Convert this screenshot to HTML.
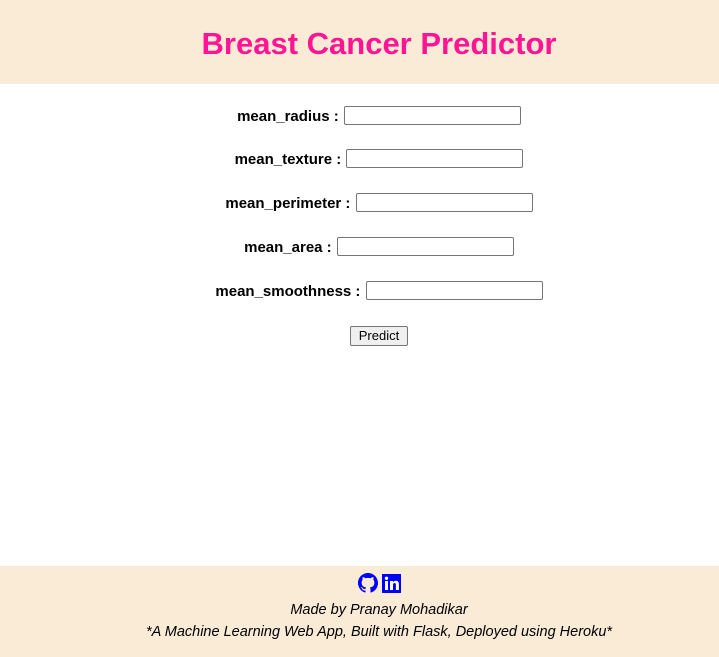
<!DOCTYPE html>
<html><head><style>
body{margin:0;width:719px;height:657px;overflow:hidden;background:#fff;font-family:"Liberation Sans",sans-serif;position:relative}
.wrap{width:758px;position:absolute;left:0;top:0}
.hdr{height:84px;background:#faebd7;text-align:center}
.hdr h1{margin:0;padding-top:25px;font-size:31px;color:#ff1493;font-weight:bold;line-height:38px}
.row{position:absolute;left:0;width:758px;text-align:center;font-weight:bold;font-size:15px;color:#000;height:22px;line-height:22px}
.row input{width:171px;height:15px;border:1px solid #767676;border-radius:2px;padding:1px 2px;vertical-align:middle;margin:0;margin-left:1px;position:relative;top:-2px}
.btn{position:absolute;left:350px;top:326px;width:58px;height:20px;border:1px solid #767676;border-radius:2px;background:#efefef;font-size:13px;text-align:center;line-height:18px;box-sizing:border-box}
.ftr{position:absolute;left:0;top:566px;width:719px;height:91px;background:#faebd7}
.ft{position:absolute;left:0;width:758px;text-align:center;font-style:italic;font-size:14.5px;color:#000}
</style></head><body>
<div class="wrap">
<div class="hdr"><h1>Breast Cancer Predictor</h1></div>
</div>
<div class="row" style="top:106px">mean_radius : <input></div>
<div class="row" style="top:149px">mean_texture : <input></div>
<div class="row" style="top:193px">mean_perimeter : <input></div>
<div class="row" style="top:237px">mean_area : <input></div>
<div class="row" style="top:281px">mean_smoothness : <input></div>
<div class="btn">Predict</div>
<div class="ftr"></div>
<svg style="position:absolute;left:358px;top:573px" width="20" height="20" viewBox="0 0 16 16"><path fill="#0000ff" d="M8 0C3.58 0 0 3.580 0 8c0 3.54 2.29 6.53 5.470 7.59.4.07.55-.17.55-.38v-1.33c-2.23.48-2.7-1.07-2.7-1.070-.36-.93-.89-1.17-.89-1.17-.73-.5.05-.49.05-.49.8.06 1.23.83 1.23.83.71 1.23 1.87.87 2.33.66.07-.52.28-.87.51-1.07-1.78-.2-3.65-.89-3.65-3.95 0-.87.31-1.59.82-2.15-.08-.2-.36-1.02.08-2.12 0 0 .67-.21 2.2.82a7.6 7.6 0 0 1 4 0c1.53-1.04 2.2-.82 2.2-.82.44 1.1.16 1.92.08 2.12.51.56.82 1.27.82 2.15 0 3.07-1.87 3.75-3.65 3.95.29.25.54.73.54 1.48v2.2c0 .21.15.46.55.38A8 8 0 0 0 16 8c0-4.42-3.58-8-8-8z"/></svg>
<svg style="position:absolute;left:382px;top:574px" width="19" height="19" viewBox="0 0 19 19"><rect width="19" height="19" fill="#0000ff"/><rect x="3" y="7" width="3" height="9" fill="#fff"/><circle cx="4.5" cy="4.3" r="1.7" fill="#fff"/><path fill="#fff" d="M8 7h3v1.4c.6-1 1.6-1.6 2.9-1.6 2 0 3 1.2 3 3.6V16h-3v-5.2c0-1.2-.4-1.8-1.3-1.8-1 0-1.6.7-1.6 1.9V16H8z"/></svg>
<div class="ft" style="top:602px">Made by Pranay Mohadikar</div>
<div class="ft" style="top:624px">*A Machine Learning Web App, Built with Flask, Deployed using Heroku*</div>
</body></html>
